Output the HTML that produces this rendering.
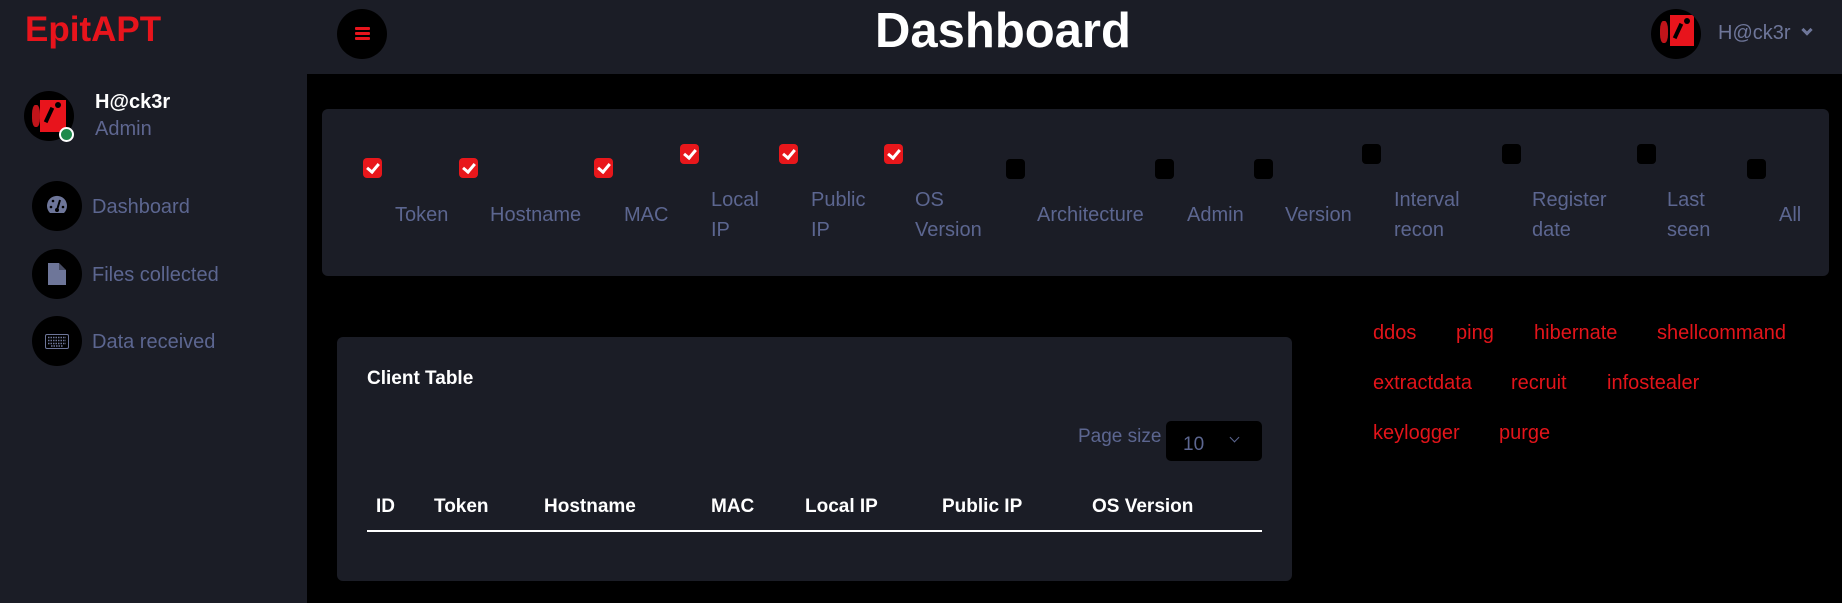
<!DOCTYPE html>
<html><head><meta charset="utf-8"><style>
*{margin:0;padding:0;box-sizing:border-box}
body{width:1842px;height:603px;background:#000;font-family:"Liberation Sans",Arial,sans-serif;position:relative;overflow:hidden}
.a{position:absolute;white-space:nowrap}
.hdr{left:0;top:0;width:1842px;height:74px;background:#1b1d26}
.side{left:0;top:74px;width:307px;height:529px;background:#1b1d26}
.circ{position:absolute;border-radius:50%;background:#000}
.lbl{color:#5c6690;font-size:20px;line-height:30px}
.cb{position:absolute;width:19px;height:20px;border-radius:4px;background:#000}
.cb.on{background:#e8171b}
.cb.on::after{content:"";position:absolute;left:6px;top:3px;width:5px;height:9px;border:solid #fff;border-width:0 3px 3px 0;transform:rotate(40deg)}
.th{color:#fff;font-weight:bold;font-size:19px;line-height:24px;top:495px}
.cmd{color:#e3141a;font-size:20px;line-height:24px}
</style></head><body>
<div class="a hdr"></div>
<div class="a side"></div>
<div class="a" style="left:25px;top:10px;font-size:35px;font-weight:bold;color:#e8141c;line-height:40px">EpitAPT</div>
<div class="circ" style="left:337px;top:9px;width:50px;height:50px"></div>
<div class="a" style="left:355px;top:27px;width:15px;height:3px;background:#e8141c;border-radius:1px;box-shadow:0 5px 0 #e8141c,0 10px 0 #e8141c"></div>
<div class="a" style="left:875px;top:3px;font-size:49px;font-weight:bold;color:#fff;line-height:56px">Dashboard</div>

<!-- top-right avatar -->
<div class="circ" style="left:1651px;top:9px;width:50px;height:50px;overflow:hidden">
 <div style="position:absolute;left:19px;top:6px;width:24px;height:31px;background:#e8141c"></div>
 <div style="position:absolute;left:9px;top:12px;width:8px;height:22px;background:#c0141a;border-radius:40%"></div>
 <div style="position:absolute;left:25px;top:14px;width:4px;height:16px;background:#000;transform:rotate(25deg)"></div>
 <div style="position:absolute;left:33px;top:9px;width:6px;height:6px;background:#000;border-radius:50%"></div>
</div>
<div class="a" style="left:1718px;top:21px;font-size:20px;color:#6e7699;line-height:24px">H@ck3r</div>
<div class="a" style="left:1803px;top:26px;width:8px;height:8px;border:solid #6e7699;border-width:0 3px 3px 0;transform:rotate(45deg)"></div>

<!-- sidebar user -->
<div class="circ" style="left:24px;top:91px;width:50px;height:50px;overflow:hidden">
 <div style="position:absolute;left:16px;top:9px;width:26px;height:32px;background:#e8141c"></div>
 <div style="position:absolute;left:8px;top:14px;width:8px;height:22px;background:#c0141a;border-radius:40%"></div>
 <div style="position:absolute;left:23px;top:16px;width:4px;height:16px;background:#000;transform:rotate(25deg)"></div>
 <div style="position:absolute;left:31px;top:11px;width:6px;height:6px;background:#000;border-radius:50%"></div>
</div>
<div class="a" style="left:59px;top:127px;width:15px;height:15px;border-radius:50%;background:#1e8a4c;border:2px solid #fff"></div>
<div class="a" style="left:95px;top:90px;font-size:20px;font-weight:bold;color:#fff;line-height:24px">H@ck3r</div>
<div class="a" style="left:95px;top:117px;font-size:20px;color:#5e6690;line-height:24px">Admin</div>

<div class="circ" style="left:32px;top:181px;width:50px;height:50px"></div>
<svg class="a" style="left:45px;top:195px" width="24" height="20" viewBox="0 0 24 20"><path d="M5 18 A10 10 0 1 1 19 18 Z" fill="#6e7699"/><circle cx="12" cy="15" r="2" fill="#000"/><path d="M12 15 L15 5" stroke="#000" stroke-width="2"/><circle cx="6" cy="12" r="1.3" fill="#000"/><circle cx="8" cy="6" r="1.3" fill="#000"/><circle cx="18" cy="12" r="1.3" fill="#000"/></svg>
<div class="a lbl" style="left:92px;top:192px">Dashboard</div>

<div class="circ" style="left:32px;top:249px;width:50px;height:50px"></div>
<svg class="a" style="left:48px;top:263px" width="18" height="22" viewBox="0 0 18 22"><path d="M0 0 H11 L18 7 V22 H0 Z" fill="#6e7699"/><path d="M11 0 V7 H18" fill="#000" opacity=".35"/></svg>
<div class="a lbl" style="left:92px;top:260px">Files collected</div>

<div class="circ" style="left:32px;top:316px;width:50px;height:50px"></div>
<svg class="a" style="left:45px;top:334px" width="24" height="15" viewBox="0 0 24 15"><rect x="0.5" y="0.5" width="23" height="14" rx="1.5" fill="none" stroke="#6e7699"/><path d="M3 3.5h18M3 6.5h18M3 9.5h18M6 12h12" stroke="#6e7699" stroke-width="1.4" stroke-dasharray="1.5 1"/></svg>
<div class="a lbl" style="left:92px;top:327px">Data received</div>

<!-- filter panel -->
<div class="a" style="left:322px;top:109px;width:1507px;height:167px;background:#1b1d26;border-radius:6px"></div>
<div class="cb on" style="left:363px;top:158px"></div><div class="a lbl" style="left:395px;top:200px">Token</div>
<div class="cb on" style="left:459px;top:158px"></div><div class="a lbl" style="left:490px;top:200px">Hostname</div>
<div class="cb on" style="left:594px;top:158px"></div><div class="a lbl" style="left:624px;top:200px">MAC</div>
<div class="cb on" style="left:680px;top:144px"></div><div class="a lbl" style="left:711px;top:185px">Local<br>IP</div>
<div class="cb on" style="left:779px;top:144px"></div><div class="a lbl" style="left:811px;top:185px">Public<br>IP</div>
<div class="cb on" style="left:884px;top:144px"></div><div class="a lbl" style="left:915px;top:185px">OS<br>Version</div>
<div class="cb" style="left:1006px;top:159px"></div><div class="a lbl" style="left:1037px;top:200px">Architecture</div>
<div class="cb" style="left:1155px;top:159px"></div><div class="a lbl" style="left:1187px;top:200px">Admin</div>
<div class="cb" style="left:1254px;top:159px"></div><div class="a lbl" style="left:1285px;top:200px">Version</div>
<div class="cb" style="left:1362px;top:144px"></div><div class="a lbl" style="left:1394px;top:185px">Interval<br>recon</div>
<div class="cb" style="left:1502px;top:144px"></div><div class="a lbl" style="left:1532px;top:185px">Register<br>date</div>
<div class="cb" style="left:1637px;top:144px"></div><div class="a lbl" style="left:1667px;top:185px">Last<br>seen</div>
<div class="cb" style="left:1747px;top:159px"></div><div class="a lbl" style="left:1779px;top:200px">All</div>

<!-- table card -->
<div class="a" style="left:337px;top:337px;width:955px;height:244px;background:#1b1d26;border-radius:6px"></div>
<div class="a" style="left:367px;top:368px;font-size:19px;font-weight:bold;color:#fff;line-height:22px">Client Table</div>
<div class="a" style="left:1078px;top:425px;font-size:19px;color:#5c6690;line-height:24px">Page size</div>
<div class="a" style="left:1166px;top:421px;width:96px;height:40px;background:#000;border-radius:5px"></div>
<div class="a" style="left:1183px;top:433px;font-size:19px;color:#5c6690;line-height:24px">10</div>
<div class="a" style="left:1231px;top:434px;width:7px;height:7px;border:solid #5c6690;border-width:0 1.5px 1.5px 0;transform:rotate(45deg)"></div>
<div class="a th" style="left:376px">ID</div>
<div class="a th" style="left:434px">Token</div>
<div class="a th" style="left:544px">Hostname</div>
<div class="a th" style="left:711px">MAC</div>
<div class="a th" style="left:805px">Local IP</div>
<div class="a th" style="left:942px">Public IP</div>
<div class="a th" style="left:1092px">OS Version</div>
<div class="a" style="left:367px;top:530px;width:895px;height:2px;background:#fff"></div>

<!-- commands -->
<div class="a cmd" style="left:1373px;top:321px">ddos</div>
<div class="a cmd" style="left:1456px;top:321px">ping</div>
<div class="a cmd" style="left:1534px;top:321px">hibernate</div>
<div class="a cmd" style="left:1657px;top:321px">shellcommand</div>
<div class="a cmd" style="left:1373px;top:371px">extractdata</div>
<div class="a cmd" style="left:1511px;top:371px">recruit</div>
<div class="a cmd" style="left:1607px;top:371px">infostealer</div>
<div class="a cmd" style="left:1373px;top:421px">keylogger</div>
<div class="a cmd" style="left:1499px;top:421px">purge</div>
</body></html>
